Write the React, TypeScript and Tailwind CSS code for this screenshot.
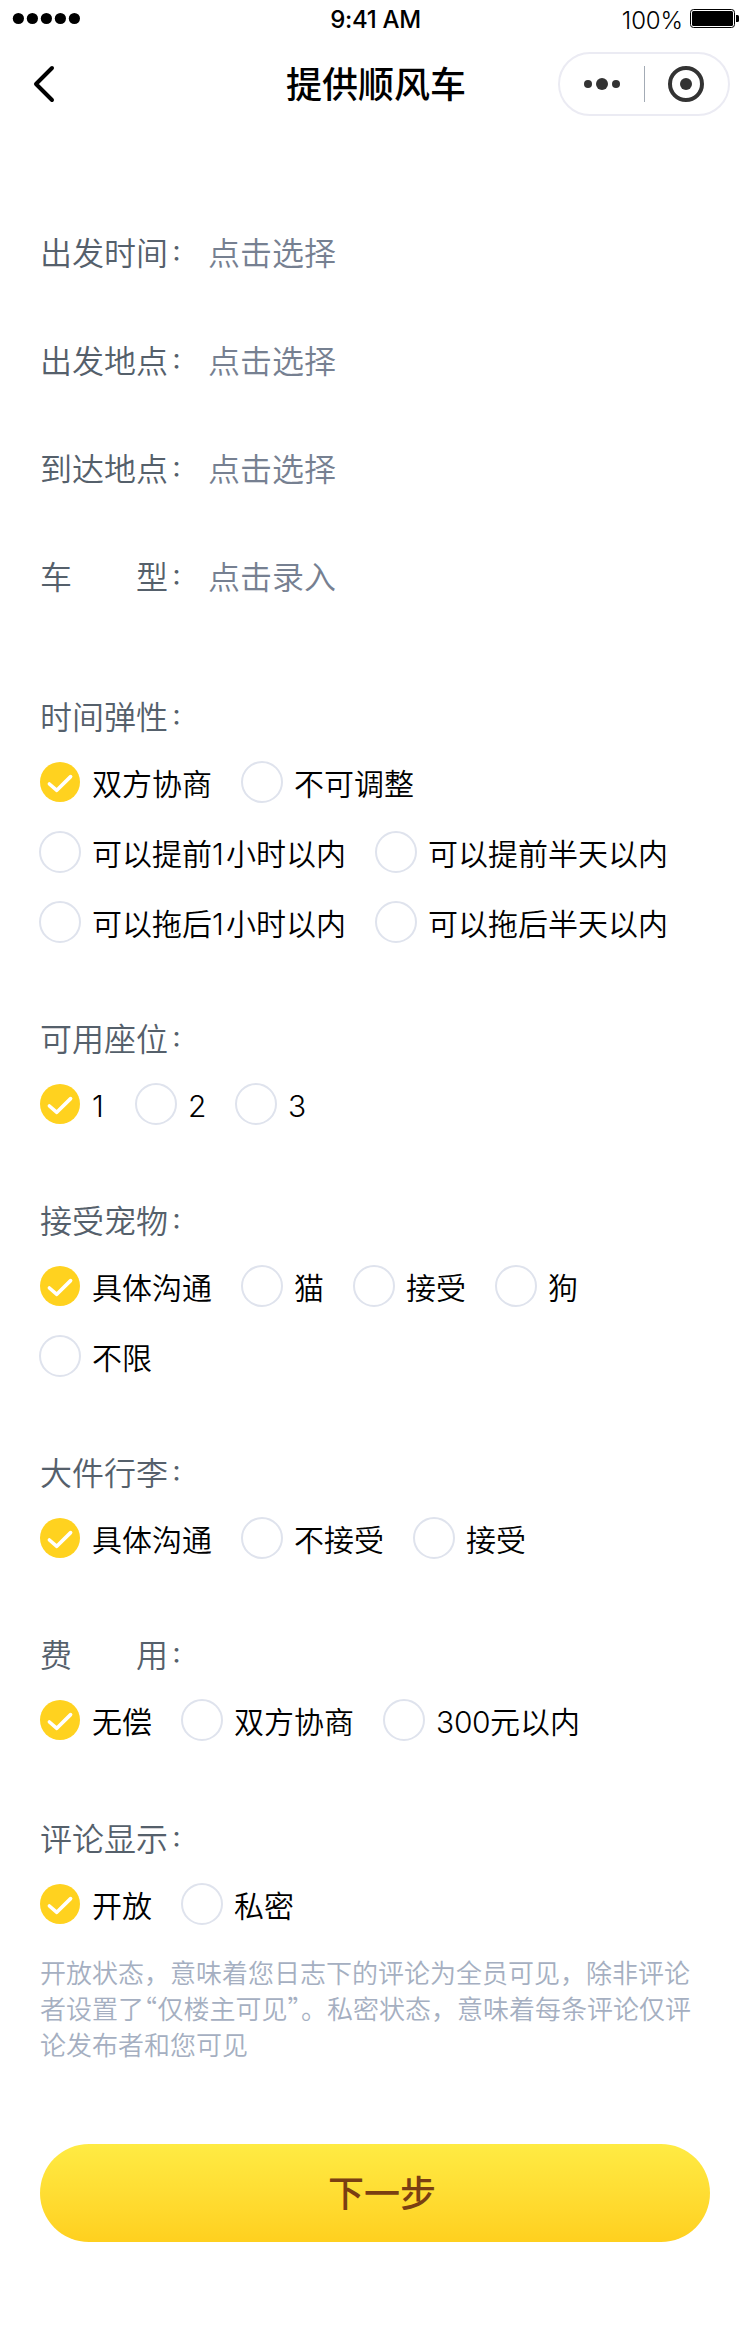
import React from 'react';

const CJK = "font-['Inter','Noto_Sans_CJK_SC',sans-serif]";

function StatusBar() {
  return (
    <div className="flex h-10 items-start justify-between pr-[11px] pl-[12px]">
      <svg className="mt-[12px] h-[13px] w-[238px]" viewBox="0 0 238 13">
        {[6.4, 20.4, 34.4, 48.4, 62.4].map((x) => (
          <circle key={x} cx={x} cy="6.5" r="5.6" fill="#000" />
        ))}
      </svg>
      <span className="mt-1 text-[24px] leading-8 font-medium tracking-[-0.3px]">9:41 AM</span>
      <div className="flex w-[238px] justify-end">
        <span className="mt-[5px] mr-[7px] text-[24px] leading-8 font-light tracking-[-0.1px]">100%</span>
        <svg className="mt-[9px] h-[19px] w-[49px]" viewBox="0 0 49 19">
          <rect x="0.5" y="0.5" width="44" height="18" rx="3" fill="none" stroke="#000" />
          <rect x="2" y="2" width="41" height="15" rx="1.5" fill="#000" />
          <path d="M46 6h1.5a1.5 1.5 0 0 1 1.5 1.5v4a1.5 1.5 0 0 1-1.5 1.5H46z" fill="#000" />
        </svg>
      </div>
    </div>
  );
}

function NavBar() {
  return (
    <header className="flex h-[88px] items-center justify-between pr-5 pl-8">
      <div className="w-[162px]">
        <svg className="h-10 w-6" viewBox="0 0 24 40" fill="none" stroke="#000" strokeWidth="4" strokeLinecap="round" strokeLinejoin="round">
          <path d="M20 4 4 20l16 16" />
        </svg>
      </div>
      <h1 className="pt-0.5 text-[36px] leading-[50px] font-medium">提供顺风车</h1>
      <svg className="h-16 w-[172px]" viewBox="0 0 172 64">
        <rect x="1" y="1" width="170" height="62" rx="31" fill="#fff" stroke="#ebebf3" strokeWidth="2" />
        <g fill="#333">
          <circle cx="30" cy="32" r="4" />
          <circle cx="44" cy="32" r="6" />
          <circle cx="58" cy="32" r="4" />
          <circle cx="128" cy="32" r="6" />
        </g>
        <circle cx="128" cy="32" r="16" fill="none" stroke="#333" strokeWidth="4" />
        <path d="M86.5 14v36" stroke="#a3abb5" />
      </svg>
    </header>
  );
}

function Colon() {
  return <span className="ml-[3px] align-[5px] text-[22px] leading-none font-medium">：</span>;
}

function Field({ label, value }: { label: string; value: string }) {
  return (
    <div className="flex h-[108px] items-center pt-[3px] text-[32px] leading-[48px]">
      <span className="h-12 w-[168px] shrink-0 whitespace-pre text-[#55606b]">
        {label}
        <Colon />
      </span>
      <span className="h-12 text-[#768091]">{value}</span>
    </div>
  );
}

function Label({ text }: { text: string }) {
  return (
    <span className="h-10 pt-[1.5px] text-[30px] leading-10 whitespace-nowrap">
      {text.split(/(\d)/).filter(Boolean).map((part, i) =>
        /\d/.test(part) ? (
          <span key={i} className={part === '1' ? 'inline-block w-[14px]' : 'inline-block w-[18px]'}>
            {part}
          </span>
        ) : (
          part
        ),
      )}
    </span>
  );
}

function Radio({ label, checked }: { label: string; checked: boolean }) {
  return (
    <div className="flex h-10 items-center gap-3">
      <svg className="h-10 w-10 overflow-visible" viewBox="0 0 40 40">
        {checked ? (
          <>
            <circle cx="20" cy="20" r="20" fill="#ffd21f" />
            <path d="M9.4 22 16.8 28.3 30.6 14.6" fill="none" stroke="#fff" strokeWidth="3.6" strokeLinecap="round" strokeLinejoin="round" />
          </>
        ) : (
          <circle cx="20" cy="20" r="20" fill="#fff" stroke="#dfe3ed" strokeWidth="2" />
        )}
      </svg>
      <Label text={label} />
    </div>
  );
}

function Group({ title, options }: { title: string; options: string[] }) {
  return (
    <section>
      <h2 className="h-12 pt-px text-[32px] leading-[48px] whitespace-pre text-[#55606b]">
        {title}
        <Colon />
      </h2>
      <div className="mt-[21px] flex flex-wrap gap-[30px]">
        {options.map((o, i) => (
          <Radio key={o} label={o} checked={i === 0} />
        ))}
      </div>
    </section>
  );
}

export default function App() {
  return (
    <div className={`h-[2342px] w-[750px] overflow-hidden bg-white font-[350] text-black ${CJK}`} lang="zh-CN">
      <StatusBar />
      <NavBar />
      <main className="px-10 pt-[70px]">
        <Field label="出发时间" value="点击选择" />
        <Field label="出发地点" value="点击选择" />
        <Field label="到达地点" value="点击选择" />
        <Field label="车　　型" value="点击录入" />
        <div className="mt-[63px] flex flex-col gap-[73px]">
          <Group title="时间弹性" options={['双方协商', '不可调整', '可以提前1小时以内', '可以提前半天以内', '可以拖后1小时以内', '可以拖后半天以内']} />
          <Group title="可用座位" options={['1', '2', '3']} />
          <Group title="接受宠物" options={['具体沟通', '猫', '接受', '狗', '不限']} />
          <Group title="大件行李" options={['具体沟通', '不接受', '接受']} />
          <Group title="费　　用" options={['无偿', '双方协商', '300元以内']} />
        </div>
        <div className="mt-[75px]">
          <Group title="评论显示" options={['开放', '私密']} />
        </div>
        <p className="mt-[32px] h-[108px] text-[26px] leading-9 whitespace-nowrap text-[#a5afc1]">
          开放状态，意味着您日志下的评论为全员可见，除非评论
          <br />
          者设置了<span className="inline-block w-[13.5px] font-['Noto_Sans_CJK_SC'] leading-none [font-feature-settings:'halt']">“</span>仅楼主可见
          <span className="inline-block w-[13.5px] font-['Noto_Sans_CJK_SC'] leading-none [font-feature-settings:'halt']">”</span>。私密状态，意味着每条评论仅评
          <br />
          论发布者和您可见
        </p>
        <button className="mt-[80px] flex h-[98px] w-[670px] items-center justify-center rounded-full bg-linear-to-b from-[#ffeb43] to-[#ffd01e] pt-0.5 pl-[14px] text-[36px] font-medium text-[#7a3f12]">
          下一步
        </button>
      </main>
    </div>
  );
}
